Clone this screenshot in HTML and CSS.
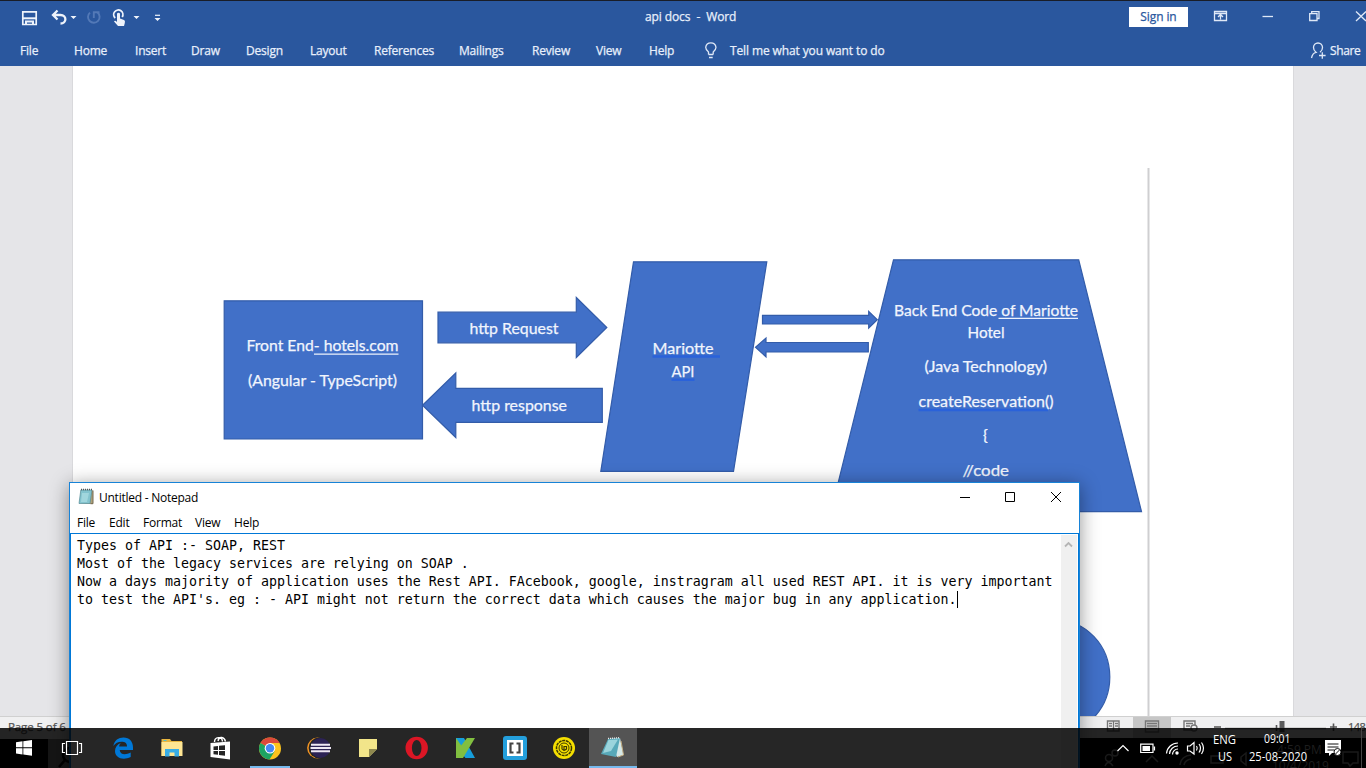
FILE: index.html
```html
<!DOCTYPE html>
<html lang="en">
<head>
<meta charset="utf-8">
<title>api docs - Word</title>
<link rel="stylesheet" href="styles.css">
</head>
<body>
<div class="desktop">
  <main class="word">
    <header class="ribbon">
      <svg class="ribbon-art" width="1366" height="66" viewBox="0 0 1366 66">
        <g fill="none" stroke="#eef3fb" stroke-width="1.7">
          <path d="M22.800 11.800H36.200V24.500H22.800Z"/><path d="M23 18.300H36" stroke-width="2"/><path d="M26 25V21.500H33V25" stroke-width="2"/>
          <path d="M57.500 10.500L53 15L57.500 19.500M53.500 15H60.500C67 15 67 23.500 60.500 23.500" stroke-width="2.300"/>
          <path d="M97.500 12.500A5.800 5.800 0 1 1 90 12.600M93.800 18V12.200H99.500" stroke="#5379b7" stroke-width="1.900"/>
          <path d="M115.200 18A4.600 4.600 0 1 1 122.200 17" stroke-width="1.800"/>
          <path d="M155 15.300H160" stroke-width="1.200"/>
        </g>
        <g fill="#eef3fb">
          <path d="M117 13.500Q118.500 12 120 13.500V18.500L124 20Q125.500 20.700 124.800 23L124 26H118L114 21.500Q115 20 117 22Z"/>
          <path d="M70.500 16H76.500L73.500 19ZM133.500 16H139.500L136.500 19ZM154.500 18H160.500L157.500 21Z"/>
        </g>
        <g fill="none" stroke="#dfe8f7" stroke-width="1.300">
          <path d="M708.500 54.500V52Q705.700 49.800 705.700 47.300A5.200 5.200 0 0 1 716 47.300Q716 49.800 713.200 52V54.500M708.500 54.500H713.200M709 57.500H712.700"/>
          <path d="M1214.500 11.500H1226.500V20.500H1214.500ZM1214.500 13.500H1226.500M1220.500 19.500V14.500M1218 17L1220.500 14.500L1223 17"/>
          <path d="M1262.500 16.500H1273"/>
          <path d="M1309.700 13.700H1317V20.500H1309.700ZM1311.700 13.500V11.700H1319V18.500H1317"/>
          <path d="M1356 11.500L1366 21M1366 11.500L1356 21"/>
          <path d="M1311.500 58Q1312.500 53 1316 52.300Q1313.500 50.500 1313.500 47.500A4.500 4.500 0 0 1 1322.500 47.500Q1322.500 50.500 1320 52.300M1322.300 52.300V58.800M1319 55.500H1325.600"/>
        </g>
      </svg>
      <div class="titlebar">
        <div class="title">api docs&nbsp; -&nbsp; Word</div>
        <div class="signin">Sign in</div>
      </div>
      <nav class="tabs">
        <span class="w-file">File</span><span class="w-home">Home</span><span class="w-insert">Insert</span><span class="w-draw">Draw</span><span class="w-design">Design</span><span class="w-layout">Layout</span><span class="w-refs">References</span><span class="w-mail">Mailings</span><span class="w-review">Review</span><span class="w-view">View</span><span class="w-help">Help</span><span class="w-tell">Tell me what you want to do</span><span class="share">Share</span>
      </nav>
    </header>
    <section class="workspace">
      <div class="page">
        <svg class="diagram" width="1220" height="650" viewBox="73 66 1220 650">
          <path d="M1148.500 168V716" stroke="#cfcfd1" stroke-width="2"/>
          <g fill="#4170c8" stroke="#335ca9" stroke-width="1.200">
            <path d="M224.200 300.800H422.500V439H224.200Z"/>
            <path d="M438 312.200H576.300V297.500L606.800 327.500L576.300 357.500V342.800H438Z"/>
            <path d="M602.300 388.300H455.800V373L422.500 405.200L455.800 437.500V422.300H602.300Z"/>
            <path d="M633.500 261.800H766.800L733.500 471.300H600.800Z"/>
            <path d="M762.500 315.300H868.700V311.300L877.300 319.700L868.700 328V324H762.500Z"/>
            <path d="M868.300 342.500H766V338L755.500 347.200L766 356.800V352H868.300Z"/>
            <path d="M893.500 259.800H1078.700L1141.500 511.600H831Z"/>
            <ellipse cx="1056" cy="677" rx="53.800" ry="57"/>
          </g>
          <g stroke="#2a62da" stroke-width="2.500"><path d="M652.500 356.500H720M671.500 379.700H694.500M918.500 410H1048"/></g>
          <g stroke="#edf2fc" stroke-width="1.300"><path d="M314 354.200H398.500M998.500 318.300H1078"/></g>
          <g class="shape-text">
            <text x="246.500" y="351" textLength="152" lengthAdjust="spacingAndGlyphs">Front End- hotels.com</text>
            <text x="248" y="386" textLength="149" lengthAdjust="spacingAndGlyphs">(Angular - TypeScript)</text>
            <text x="469.500" y="334" textLength="89" lengthAdjust="spacingAndGlyphs">http Request</text>
            <text x="471.500" y="411" textLength="95.500" lengthAdjust="spacingAndGlyphs">http response</text>
            <text x="652.500" y="353.500" textLength="61" lengthAdjust="spacingAndGlyphs">Mariotte</text>
            <text x="671.500" y="377" textLength="23" lengthAdjust="spacingAndGlyphs">API</text>
            <text x="894" y="315.500" textLength="184" lengthAdjust="spacingAndGlyphs">Back End Code of Mariotte</text>
            <text x="967.500" y="337.500" textLength="37" lengthAdjust="spacingAndGlyphs">Hotel</text>
            <text x="924.500" y="372" textLength="122.500" lengthAdjust="spacingAndGlyphs">(Java Technology)</text>
            <text x="918.500" y="406.500" textLength="135" lengthAdjust="spacingAndGlyphs">createReservation()</text>
            <text x="983" y="441">{</text>
            <text x="962.500" y="475.500" textLength="46.500" lengthAdjust="spacingAndGlyphs">//code</text>
          </g>
        </svg>
      </div>
    </section>
    <footer class="status">
      <span class="page-count">Page 5 of 6</span>
      <svg class="view-tools" width="286" height="52" viewBox="1080 716 286 52">
        <path d="M1080 738H1366V768H1080Z" fill="#000"/>
        <path d="M1133 717H1171V738H1133Z" fill="#c6c6c6"/>
        <g fill="none" stroke="#777" stroke-width="1.400">
          <path d="M1107.500 721H1113.500V731H1107.500ZM1113.500 721H1119V731H1113.500ZM1109 723.500H1112M1109 726H1112M1115 723.500H1118M1115 726H1118"/>
          <path d="M1145.500 721H1158.500V732H1145.500ZM1147 723.500H1157M1147 726H1157M1147 728.500H1157"/>
          <path d="M1193 730H1184V721H1195V725M1186 723.500H1193M1186 726H1190"/><circle cx="1194" cy="728" r="3"/>
          <path d="M1225 728.500H1326"/>
        </g>
        <path d="M1214 727H1221M1330 727H1337M1333.500 723.500V731M1276.500 725V731" stroke="#555" stroke-width="1.600"/>
        <path d="M1279.500 721H1284.500V732H1279.500Z" fill="#5c5c5c"/>
        <g fill="none" stroke="#aaa" stroke-width="1.500">
          <circle cx="1109" cy="758" r="3.500"/><circle cx="1115" cy="753" r="3"/><path d="M1105 766Q1108 759 1113 766M1146 762L1152 756L1158 762M1211 756H1223V763H1211ZM1180 765Q1181 756 1191 755M1184 765Q1185 760 1191 759M1241 757L1246 753V765L1241 761ZM1343 752H1358V763H1353L1350 766L1348 763H1343Z"/>
        </g>
      </svg>
      <span class="zoom-value">148</span>
      <span class="inner-start"></span>
      <svg class="inner-search" width="12" height="24" viewBox="0 0 12 24"><circle cx="12" cy="11" r="7" fill="none" stroke="#000" stroke-width="2.500"/><path d="M7 16L1 23" stroke="#000" stroke-width="2.500"/></svg>
    </footer>
  </main>

  <section class="notepad">
    <div class="np-title">
      <svg width="17" height="18" viewBox="0 0 17 18"><path d="M3 2.500H15V16H13L2 15Z" fill="#b0a178"/><path d="M2.800 2H14L12 15.500H1Z" fill="#83c3ce" stroke="#578c96" stroke-width=".7"/><path d="M4 5H11L9 14H3Z" fill="#b6e3e8" opacity=".6"/><path d="M3 1.500H14.500" stroke="#555" stroke-width="1.500" stroke-dasharray="1 1"/><path d="M15 2.500V15.700H12.500" stroke="#756b54" fill="none"/></svg>
      <span>Untitled - Notepad</span>
      <svg class="np-controls" width="98" height="12" viewBox="0 0 98 12"><path d="M0 6.500H10M45.500 1.500H54.500V10.500H45.500ZM91 1L101 11M101 1L91 11" fill="none" stroke="#000"/></svg>
    </div>
    <nav class="np-menu"><span class="n-file">File</span><span class="n-edit">Edit</span><span class="n-format">Format</span><span class="n-view">View</span><span>Help</span></nav>
    <div class="np-edit">
      <div class="np-text">Types of API :- SOAP, REST
Most of the legacy services are relying on SOAP .
Now a days majority of application uses the Rest API. FAcebook, google, instragram all used REST API. it is very important
to test the API's. eg : - API might not return the correct data which causes the major bug in any application.<i class="caret"></i></div>
      <div class="np-scroll"><svg width="9" height="7" viewBox="0 0 9 7"><path d="M1 5.500L4.500 2L8 5.500" fill="none" stroke="#b5b5b5" stroke-width="1.800"/></svg></div>
    </div>
  </section>

  <footer class="taskbar">
    <span class="run-chrome"></span><span class="run-notepad"></span>
    <svg class="task-icons" width="1366" height="40" viewBox="0 728 1366 40">
      <path fill="#fff" d="M16 742.200L22.500 741.300V747.300H16ZM23.300 741.200L32 740V747.300H23.300ZM16 748.300H22.500V754.500L16 753.500ZM23.300 748.300H32V755.800L23.300 754.600Z"/>
      <path d="M66.500 741.500H77.500V754.500H66.500ZM65 743.500H62.500V752.500H65M79 743.500H81.500V752.500H79" fill="none" stroke="#fff" stroke-width="1.200"/>
      <path fill="#0078d7" d="M113.300 746C114.500 740.300 118.500 737.500 123.500 737.500C129.500 737.500 133 741.500 133 747.500V750H119.700C120 754.500 125 755.500 130.700 752.600V757C122.500 761 115 757.500 115 751C115 747.300 117.200 744.500 120.800 743C119.500 744.300 119.200 745.500 119.200 746.500H127C127 743 125 741.700 121.500 741.700C118 741.700 115.300 743.200 113.300 746Z"/>
      <path fill="#e9b63f" d="M161.500 739H170L171.500 741H182V756H161.500Z"/><path fill="#ffe693" d="M161.500 742H182.500V756H161.500Z"/><path fill="#39ade5" d="M165 749H179V756.500H174.500V752.500H169.500V756.500H165Z"/><path fill="#59bdc5" d="M163.500 740H166.500V741H163.500Z"/>
      <path fill="#fff" d="M210.500 743L230 741.500V759.500L210.500 757Z"/><path d="M214.500 742C214.500 736.500 222 736 222.500 741.500M218 741C219 735.500 224.500 737 225.500 741.500" fill="none" stroke="#fff" stroke-width="1.400"/><path fill="#252525" d="M213.500 746.500L218 746V750H213.500ZM219 745.800L225 745.200V750H219ZM213.500 751H218V754.700L213.500 754.200ZM219 751H225V755.700L219 754.900Z"/>
      <circle cx="270" cy="748.500" r="11" fill="#fbc31d"/><path fill="#dc493b" d="M270 748.500L260.500 743A11 11 0 0 1 279.600 743H270Z"/><path fill="#1da462" d="M270 748.500L260.500 743A11 11 0 0 0 269.500 759.500L274.500 751.500Z"/><circle cx="270" cy="748.300" r="5.300" fill="#fff"/><circle cx="270" cy="748.300" r="4.200" fill="#4587f4"/>
      <circle cx="317.500" cy="748" r="10.400" fill="#f49522"/><circle cx="319" cy="748" r="10.400" fill="#252525"/><circle cx="320.500" cy="748" r="10" fill="#2c2255"/><path d="M311 744.700H330M310.500 748H331M311 751.300H330" stroke="#eee8f4" stroke-width="1.900"/>
      <path fill="#f2e58a" d="M359 739H377V749L369 757H359Z"/><path fill="#8e884f" d="M369 757V749H377Z"/>
      <path fill="#dc1625" fill-rule="evenodd" d="M416.700 736.800A11.200 11.200 0 1 1 416.700 759.200A11.200 11.200 0 1 1 416.700 736.800ZM416.700 740A4.800 8 0 1 0 416.700 756A4.800 8 0 1 0 416.700 740Z"/>
      <path fill="#169edb" d="M456 738H464L475 758H465.500L456 747ZM467 746L475 758H468Z"/><path fill="#81bf40" d="M467 738H475L463 758H456V752Z"/><path fill="#81bf40" d="M456 738L463 748L459 754L456 756Z"/>
      <rect x="503" y="736" width="24" height="24" rx="3" fill="#249fdc"/><path fill="#fff" d="M507 740H523V756H507Z"/><path d="M513.500 743.500H510.500V752.500H513.500M516.500 743.500H519.500V752.500H516.500" fill="none" stroke="#444" stroke-width="2.200"/>
      <circle cx="564" cy="748" r="11" fill="#f5df00"/><g fill="none" stroke="#3b3800"><circle cx="564" cy="748" r="7.500" stroke-width="1.500" stroke-dasharray="3 .7"/><circle cx="564" cy="748" r="5" stroke-width="1"/><path d="M562 745V749Q564 751.500 566.500 749V746.500H564V751" stroke-width="1.200"/></g>
      <path fill="#d5e8e8" d="M608 739L620 738L623.500 755L617 757Z"/><path fill="#58a9b9" d="M608 739L620 738L616 757L601 754Z"/><path fill="#9bd4dc" d="M608.500 740L618 739.500L611 751L603 753Z"/><path d="M608 738.500L620 737.700" stroke="#eee" stroke-dasharray="1 1" stroke-width="1.300"/><path d="M621 741L623.500 755L618 757" stroke="#c4ae83" fill="none"/>
      <g fill="none" stroke="#fff" stroke-width="1.200">
        <path d="M1117.500 751L1123 745.500L1128.500 751M1140.700 744.200H1153V752.500H1140.700ZM1154.500 746.500V750.500"/>
        <path d="M1166.500 753.500A11.500 11.500 0 0 1 1178 743M1169.500 754A8.500 8.500 0 0 1 1178 746M1172.500 754.500A5.500 5.500 0 0 1 1178 749"/>
        <path d="M1187.500 746H1190L1194 742.500V754L1190 751H1187.500ZM1196.500 746Q1198 748 1196.500 750.500M1199 744Q1202 748 1199 752.500M1201.500 742.500Q1205.500 748 1201.500 754"/>
      </g>
      <path fill="#fff" d="M1142.500 746H1150V751H1142.500Z"/><circle cx="1177" cy="753" r="1.700" fill="#fff"/>
      <path fill="#fff" d="M1325 740H1341V753H1332L1329 756V753H1325Z"/><path d="M1327.500 744H1338.500M1327.500 747H1338.500M1327.500 750H1334" stroke="#111"/><circle cx="1337.500" cy="752" r="3.500" fill="#fff" stroke="#111"/><path d="M1335.500 754L1339.500 750" stroke="#111"/>
      <path d="M1361.500 728V768" stroke="#444"/>
      <g class="ghost-text"><text x="1277" y="754">4:59 PM</text><text x="1272" y="770">10/4/2019</text></g>
      <g class="tray-text"><text x="1213" y="744" textLength="23" lengthAdjust="spacingAndGlyphs">ENG</text><text x="1218" y="761" textLength="14" lengthAdjust="spacingAndGlyphs">US</text><text x="1264" y="743" textLength="26.500" lengthAdjust="spacingAndGlyphs">09:01</text><text x="1249" y="761" textLength="58" lengthAdjust="spacingAndGlyphs">25-08-2020</text></g>
    </svg>
  </footer>
</div>
</body>
</html>
```
FILE: styles.css
```css
* { box-sizing: border-box; }
body { margin: 0; overflow: hidden; font-family: "Open Sans", "Noto Sans", sans-serif; }
svg { display: block; }
.desktop { position: relative; width: 1366px; height: 768px; overflow: hidden; }
.word { display: flex; flex-direction: column; width: 1366px; height: 768px; background: #e5e5e8; }
.ribbon { position: relative; height: 66px; flex: none; background: #2a579e; border-top: 1px solid #191d27; color: #e8effb; font-size: 12px; -webkit-text-stroke: .25px; }
.ribbon-art { position: absolute; left: 0; top: -1px; }
.titlebar { display: flex; height: 32px; padding-top: 6px; }
.title { width: 484px; margin-left: 645px; line-height: 20px; letter-spacing: -.1px; white-space: nowrap; }
.signin { width: 59px; height: 20px; background: #fff; color: #2a579e; line-height: 20px; text-align: center; letter-spacing: -.1px; }
.tabs { display: flex; height: 33px; padding: 8px 0 0 20px; line-height: 20px; white-space: nowrap; letter-spacing: -.2px; }
.tabs span { flex: none; }
.w-file { width: 54px; } .w-home { width: 61px; } .w-insert { width: 56px; } .w-draw { width: 55px; }
.w-design { width: 64px; } .w-layout { width: 64px; } .w-refs { width: 85px; } .w-mail { width: 73px; }
.w-review { width: 64px; } .w-view { width: 53px; } .w-help { width: 81px; } .w-tell { width: 600px; letter-spacing: -.12px; }
.share { letter-spacing: -.4px; }
.workspace { height: 650px; padding-left: 72px; flex: none; }
.page { width: 1222px; height: 650px; background: #fff; border: solid #d9d9dc; border-width: 0 1px; }
.shape-text { font: 16px Lato, sans-serif; fill: #f1f5fd; stroke: #f1f5fd; stroke-width: .25px; }
.status { position: relative; flex: none; height: 52px; background: #f0f0f1; border-top: 1px solid #d0d0d0; font-size: 11.5px; color: #555; -webkit-text-stroke: .25px; }
.page-count { display: block; padding: 2px 0 0 8px; line-height: 16px; letter-spacing: -.1px; }
.view-tools { position: absolute; left: 1080px; top: -1px; }
.zoom-value { position: absolute; left: 1348px; top: 2px; font-size: 11px; line-height: 16px; letter-spacing: -.5px; }
.inner-start { position: absolute; left: 0; top: 22px; width: 70px; height: 29px; background: linear-gradient(90deg, #000 0 48px, #888 48px); }
.inner-search { position: absolute; left: 58px; top: 27px; }
.notepad { position: absolute; left: 69px; top: 482px; width: 1011px; height: 300px; display: flex; flex-direction: column; border: 1px solid #1883d7; background: #fff; box-shadow: 0 3px 18px rgba(0,0,0,.42); color: #000; }
.np-title { display: flex; align-items: center; height: 30px; padding: 0 0 2px 8px; font-size: 12px; letter-spacing: -.25px; }
.np-title span { margin-left: 4px; width: 861px; }
.np-controls { overflow: visible; }
.np-menu { display: flex; height: 20px; padding-left: 7px; font-size: 12px; line-height: 20px; letter-spacing: -.22px; }
.n-file { width: 32px; } .n-edit { width: 34px; } .n-format { width: 52px; } .n-view { width: 39px; }
.np-edit { display: flex; flex: 1; border: 1px solid #0078d7; }
.np-text { flex: 1; padding: 3px 0 0 6px; font: 13.29px/18px "DejaVu Sans Mono", monospace; white-space: pre; }
.caret { display: inline-block; width: 1px; height: 17px; background: #000; vertical-align: -4px; }
.np-scroll { width: 16px; margin: 1px 1px 0 0; padding: 6px 3px; background: #f0f0f0; }
.taskbar { position: absolute; left: 0; top: 728px; width: 1366px; height: 40px; background: rgba(0,0,0,.85); }
.task-icons { position: absolute; left: 0; top: 0; }
.run-chrome { position: absolute; left: 250px; bottom: 0; width: 40px; height: 2px; background: #76b9ed; }
.run-notepad { position: absolute; left: 589px; top: 0; width: 48px; height: 40px; background: #545454; border-bottom: 2px solid #76b9ed; }
.tray-text { font: 12px "Open Sans", sans-serif; fill: #fff; }
.ghost-text { font: 12px "Open Sans", sans-serif; fill: #1e1e1e; }
```
